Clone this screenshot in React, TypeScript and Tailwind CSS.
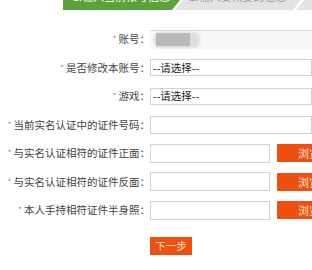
const FONT = { fontFamily: "'Noto Sans CJK SC', 'Noto Sans', sans-serif" };

const rows: { label: string; kind: 'account' | 'select' | 'text' | 'file' }[] = [
  { label: '账号：', kind: 'account' },
  { label: '是否修改本账号：', kind: 'select' },
  { label: '游戏：', kind: 'select' },
  { label: '当前实名认证中的证件号码：', kind: 'text' },
  { label: '与实名认证相符的证件正面：', kind: 'file' },
  { label: '与实名认证相符的证件反面：', kind: 'file' },
  { label: '本人手持相符证件半身照：', kind: 'file' },
];

function Field({ kind }: { kind: string }) {
  if (kind === 'account') {
    return (
      <div className="relative h-[19px] w-[200px] border-t border-[#d4d4d4] bg-[#f8f8f8]">
        <div className="absolute left-[4px] top-[1px] h-[16px] w-[46px] rounded-[6px] bg-[#dedede] blur-[1px]" />
        <div className="absolute left-[6px] top-[2px] h-[13px] w-[34px] bg-[#b9b9b9] blur-[0.6px]" />
      </div>
    );
  }
  if (kind === 'select') {
    return (
      <div className="flex h-[17px] w-[200px] items-center border border-[#d2d2d2] bg-white pl-[2px] text-[10.5px] text-[#222]">
        --请选择--
      </div>
    );
  }
  if (kind === 'text') {
    return <div className="h-[18px] w-[200px] border border-[#d2d2d2] bg-white" />;
  }
  return (
    <div className="flex items-center gap-[7px]">
      <div className="h-[19px] w-[120px] border border-[#d2d2d2] bg-white" />
      <div className="flex h-[18px] w-[64px] shrink-0 items-center justify-center bg-[#ef4f10] text-[11px] text-[#fde3d2]">
        浏览
      </div>
    </div>
  );
}

export default function App() {
  return (
    <div className="h-[270px] w-[312px] overflow-hidden bg-white" style={FONT}>
      {/* step tabs, cropped at the top */}
      <div className="flex h-[10px] overflow-hidden">
        <div className="ml-[63px] flex w-[117px] shrink-0 justify-center bg-[#5ba23b] [clip-path:polygon(0_0,100%_0,calc(100%_-_8px)_100%,0_100%)]">
          <span className="-mt-[11px] text-[11px] leading-[14px] text-white">1.输入当前帐号信息</span>
        </div>
        <div className="-ml-[5px] flex w-[126px] shrink-0 justify-center bg-[#e3e3e3] [clip-path:polygon(8px_0,100%_0,calc(100%_-_8px)_100%,0_100%)]">
          <span className="-mt-[11px] text-[11px] leading-[14px] text-[#999]">2.输入要恢复的信息</span>
        </div>
        <div className="-ml-[5px] flex-1 bg-[#e3e3e3] [clip-path:polygon(8px_0,100%_0,100%_100%,0_100%)]" />
      </div>

      <div className="mt-[15px] flex flex-col">
        {rows.map((r) => (
          <div key={r.label} className="flex h-[28.5px] items-center">
            <div className="flex w-[150px] shrink-0 items-center justify-end text-[10.5px] text-[#444]">
              <span className="mr-[2px] text-[8px] text-[#e06060]">*</span>
              <span className="whitespace-nowrap">{r.label}</span>
            </div>
            <Field kind={r.kind} />
          </div>
        ))}
        <div className="ml-[150px] mt-[12px] flex h-[18px] w-[42px] items-center justify-center bg-[#ef4f10] text-[10.5px] text-[#fde3d2]">
          下一步
        </div>
      </div>
    </div>
  );
}
